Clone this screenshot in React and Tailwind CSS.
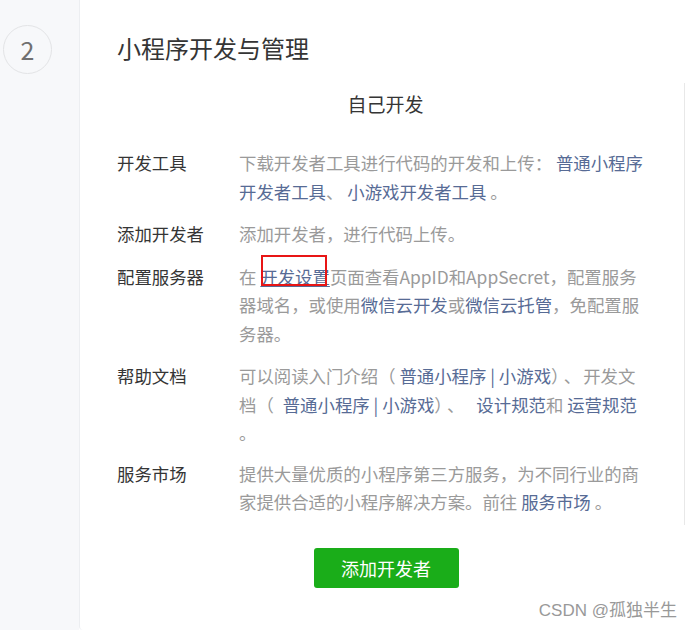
import React from "react";

const L = ({ children, u }) => (
  <span className={"text-[#576b95]" + (u ? " underline underline-offset-2" : "")}>{children}</span>
);

const Row = ({ label, children, className = "" }) => (
  <div className={"flex " + className}>
    <div className="w-[122px] shrink-0 text-[#353535]">{label}</div>
    <div className="w-[412px] text-[#9a9a9a]">{children}</div>
  </div>
);

export default function App() {
  return (
    <div
      className="flex w-[693px] h-[630px] bg-white overflow-hidden text-[17.4px] leading-[28.5px]"
      style={{ fontFamily: '"Noto Sans CJK SC", "Noto Sans", sans-serif' }}
    >
      <aside className="w-[79px] shrink-0 bg-[#f7f8fa] pt-[25px] pl-[3px]">
        <div className="w-[49px] h-[49px] rounded-full border-[1.5px] border-[#e3e4e6] flex items-center justify-center text-[25px] text-[#707070] leading-none">
          2
        </div>
      </aside>
      <main className="relative flex-1 border-l border-[#eceef1] rounded-bl-[4px] pl-[37px] pt-[31px]">
        <h1 className="text-[24px] leading-[34px] text-[#353535] font-normal">小程序开发与管理</h1>
        <div className="mt-[18px] w-[568px] border-r border-[#e8e8e8] pr-[30px] pt-[6px] pb-[8px]">
          <div className="text-center text-[19px] leading-[30px] text-[#353535]">自己开发</div>
          <div className="mt-[30px] flex flex-col gap-[14px]">
            <Row label="开发工具">
              下载开发者工具进行代码的开发和上传： <L>普通小程序开发者工具</L>、 <L>小游戏开发者工具</L> 。
            </Row>
            <Row label="添加开发者">添加开发者，进行代码上传。</Row>
            <Row label="配置服务器">
              在 <span className="relative"><L u>开发设置</L><span className="absolute left-[1px] right-[3px] top-[-9px] bottom-[3px] border-2 border-[#e81515] pointer-events-none"></span></span>页面查看AppID和AppSecret，配置服务器域名，或使用<L>微信云开发</L>或<L>微信云托管</L>，免配置服务器。
            </Row>
            <Row label="帮助文档">
              可以阅读入门介绍（ <L>普通小程序 | 小游戏</L>）<span className="ml-[4px]">、</span><span className="ml-[2px]">开发文</span>
              <br />
              档（<span className="ml-[5px]"></span> <L>普通小程序 | 小游戏</L>）<span className="ml-[4px]">、</span><span className="ml-[8px]"></span> <L>设计规范</L>和 <L>运营规范</L>
              <br />。
            </Row>
            <Row label="服务市场" className="-mt-[2px]">
              提供大量优质的小程序第三方服务，为不同行业的商家提供合适的小程序解决方案。前往 <L>服务市场</L> 。
            </Row>
          </div>
        </div>
        <div className="w-[538px] flex justify-center mt-[23px]">
          <button className="w-[145px] h-[40px] rounded-[3px] bg-[#1aad19] text-white text-[18px] leading-none">
            添加开发者
          </button>
        </div>
        <div className="absolute right-[16px] bottom-[11px] text-[17px] leading-none text-[#999]" style={{ fontFamily: '"Liberation Sans", "Noto Sans CJK SC", sans-serif' }}>
          CSDN @孤独半生
        </div>
      </main>
    </div>
  );
}
